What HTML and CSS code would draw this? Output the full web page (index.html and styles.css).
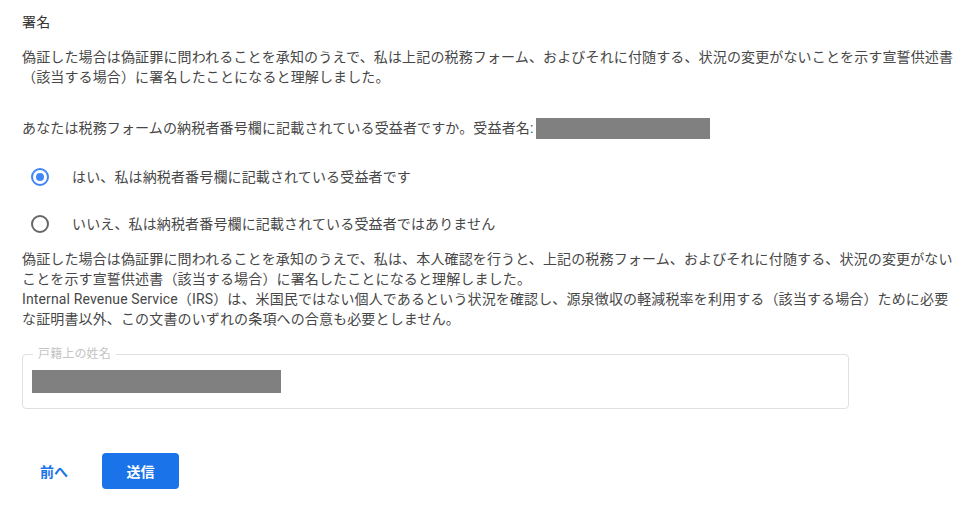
FILE: index.html
```html
<!DOCTYPE html>
<html lang="ja">
<head>
  <meta charset="UTF-8" />
  <meta name="viewport" content="width=device-width, initial-scale=1.0" />
  <title>署名</title>
  <link rel="stylesheet" href="styles.css">
</head>
<body>
  <div class="page">
    <h2 class="title">署名</h2>

    <p class="text first">偽証した場合は偽証罪に問われることを承知のうえで、私は上記の税務フォーム、およびそれに付随する、状況の変更がないことを示す宣誓供述書（該当する場合）に署名したことになると理解しました。</p>

    <p class="text question">あなたは税務フォームの納税者番号欄に記載されている受益者ですか。受益者名:<span class="redact inline"></span></p>

    <div class="radios">
      <label class="radio-row">
        <span class="radio checked"></span>
        <span>はい、私は納税者番号欄に記載されている受益者です</span>
      </label>
      <label class="radio-row">
        <span class="radio"></span>
        <span>いいえ、私は納税者番号欄に記載されている受益者ではありません</span>
      </label>
    </div>

    <p class="text notice">偽証した場合は偽証罪に問われることを承知のうえで、私は、本人確認を行うと、上記の税務フォーム、およびそれに付随する、状況の変更がないことを示す宣誓供述書（該当する場合）に署名したことになると理解しました。<br>Internal Revenue Service（IRS）は、米国民ではない個人であるという状況を確認し、源泉徴収の軽減税率を利用する（該当する場合）ために必要な証明書以外、この文書のいずれの条項への合意も必要としません。</p>

    <fieldset class="field">
      <legend>戸籍上の姓名</legend>
      <div class="redact block"></div>
    </fieldset>

    <div class="actions">
      <button class="btn-text">前へ</button>
      <button class="btn-primary">送信</button>
    </div>
  </div>
</body>
</html>
```

FILE: styles.css
```css
:root {
  --text: #474747;
  --title: #333;
  --blue: #1a73e8;
  --radio-blue: #4285f4;
  --radio-gray: #666;
  --border: #e0e0e0;
  --redact: #808080;
}

* {
  margin: 0;
  padding: 0;
  box-sizing: border-box;
}

body {
  font-family: 'Roboto', 'Noto Sans CJK JP', sans-serif;
  background: #fff;
  color: var(--text);
  font-size: 14px;
  line-height: 20px;
  letter-spacing: 0.14px;
}

.page {
  padding: 12px 12px 0 22px;
}

.title {
  font-size: 14px;
  font-weight: normal;
  line-height: 20px;
  color: var(--title);
}

.text.first {
  margin-top: 15px;
}

.text.question {
  margin-top: 31px;
}

.redact {
  background: var(--redact);
}

.redact.inline {
  display: inline-block;
  width: 174px;
  height: 21px;
  vertical-align: -6px;
  margin-left: 3px;
}

/* radios */
.radios {
  margin-top: 18px;
  display: flex;
  flex-direction: column;
  gap: 7px;
}

.radio-row {
  height: 40px;
  display: flex;
  align-items: center;
  gap: 23px;
  padding-left: 9px;
  cursor: pointer;
}

.radio {
  width: 18px;
  height: 18px;
  border-radius: 50%;
  border: 2px solid var(--radio-gray);
  display: flex;
  align-items: center;
  justify-content: center;
  flex-shrink: 0;
}

.radio.checked {
  border-color: var(--radio-blue);
}

.radio.checked::after {
  content: "";
  width: 8px;
  height: 8px;
  border-radius: 50%;
  background: var(--radio-blue);
}

.text.notice {
  margin-top: 5px;
}

/* name field */
.field {
  margin-top: 17px;
  width: 827px;
  border: 1px solid var(--border);
  border-radius: 4px;
  padding: 0 9px 15px;
}

.field legend {
  font-size: 12px;
  line-height: 16px;
  color: #c4c4c4;
  padding: 0 5px;
  margin-left: 1px;
}

.redact.block {
  margin-top: 8px;
  width: 249px;
  height: 23px;
}

/* buttons */
.actions {
  margin-top: 44px;
  display: flex;
  align-items: center;
  gap: 16px;
}

.btn-text,
.btn-primary {
  font-family: inherit;
  font-size: 14px;
  font-weight: bold;
  letter-spacing: 0;
  border: none;
  border-radius: 4px;
  height: 36px;
  cursor: pointer;
}

.btn-text {
  background: none;
  color: var(--blue);
  padding: 0 18px;
}

.btn-primary {
  background: var(--blue);
  color: #fff;
  width: 77px;
}
```
